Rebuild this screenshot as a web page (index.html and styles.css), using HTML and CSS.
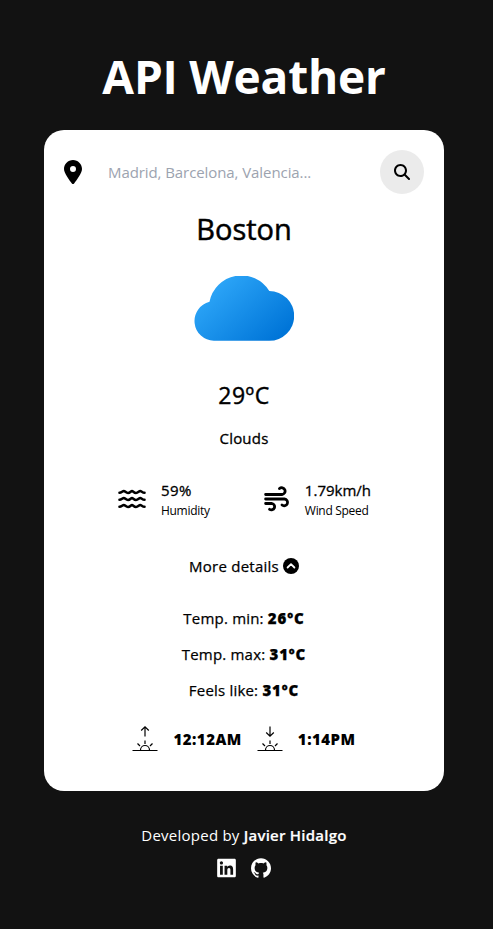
FILE: index.html
```html
<!DOCTYPE html>
<html lang="en">
<head>
<meta charset="utf-8">
<meta name="viewport" content="width=device-width, initial-scale=1">
<title>API Weather</title>
<link rel="stylesheet" href="styles.css">
</head>
<body>
<main class="app">
  <h1 class="title"><span>API Weather</span></h1>
  <section class="card">
    <form class="search">
      <svg class="pin" viewBox="0 0 384 512"><path d="M215.7 499.2C267 435 384 279.4 384 192C384 86 298 0 192 0S0 86 0 192c0 87.4 117 243 168.3 307.2c12.3 15.3 35.1 15.3 47.4 0zM192 128a64 64 0 1 1 0 128 64 64 0 1 1 0-128z"/></svg>
      <input class="field" type="text" placeholder="Madrid, Barcelona, Valencia...">
      <button class="submit" type="button" aria-label="Search"><svg width="16" height="16" viewBox="0 0 512 512"><path d="M416 208c0 45.9-14.9 88.3-40 122.7L502.6 457.4c12.5 12.5 12.5 32.8 0 45.3s-32.8 12.5-45.3 0L330.7 376c-34.4 25.2-76.8 40-122.7 40C93.1 416 0 322.9 0 208S93.1 0 208 0S416 93.1 416 208zM208 352a144 144 0 1 0 0-288 144 144 0 1 0 0 288z"/></svg></button>
    </form>
    <h2 class="city">Boston</h2>
    <svg class="cloud" viewBox="0 0 100 65">
      <defs><linearGradient id="sky" x1="22" y1="5" x2="78" y2="67" gradientUnits="userSpaceOnUse"><stop offset="0" stop-color="#2da6f8"/><stop offset="1" stop-color="#0075d8"/></linearGradient></defs>
      <path fill="url(#sky)" d="M19.800 64.800A19.800 19.800 0 0 1 15.500 25.800A32.600 32.600 0 0 1 75.300 15A24.900 24.900 0 0 1 75.300 64.800Z"/>
    </svg>
    <p class="degrees">29ºC</p>
    <p class="state">Clouds</p>
    <div class="stats">
      <div class="stat humidity">
        <svg width="28" height="20" viewBox="0 0 28 20" fill="none" stroke="#000" stroke-width="2.600" stroke-linecap="round" stroke-linejoin="round"><path d="M1.500 3.800C3.500 3.800 4.500 2 5.800 2S8 4 10 4s3-2 4-2 2 2 4 2 3-2 4.200-2S24.500 3.800 26.500 3.800"/><path d="M1.500 10.800C3.500 10.800 4.500 9 5.800 9S8 11 10 11s3-2 4-2 2 2 4 2 3-2 4.200-2S24.500 10.800 26.500 10.800"/><path d="M1.500 17.800C3.500 17.800 4.500 16 5.800 16S8 18 10 18s3-2 4-2 2 2 4 2 3-2 4.200-2S24.500 17.800 26.500 17.800"/></svg>
        <div><p class="value pct">59%</p><p class="label">Humidity</p></div>
      </div>
      <div class="stat wind">
        <svg width="26" height="26" viewBox="0 0 26 26" fill="none" stroke="#000" stroke-width="2.800" stroke-linecap="round" stroke-linejoin="round"><path d="M1.600 8.500H18a3.400 3.400 0 1 0-2.500-6"/><path d="M1.600 13H20.500a3.400 3.400 0 1 1-2.500 6"/><path d="M1.600 17.500H8a3.200 3.200 0 1 1-2.400 5.800"/></svg>
        <div><p class="value">1.79km/h</p><p class="label">Wind Speed</p></div>
      </div>
    </div>
    <p class="more"><span>More details</span><svg width="16" height="16" viewBox="0 0 16 16"><circle cx="8" cy="8" r="8"/><path d="M4.600 9.500L8 6.200l3.400 3.300" fill="none" stroke="#fff" stroke-width="1.800" stroke-linecap="round" stroke-linejoin="round"/></svg></p>
    <div class="details">
      <p>Temp. min: <b>26ºC</b></p>
      <p>Temp. max: <b>31ºC</b></p>
      <p>Feels like: <b>31ºC</b></p>
    </div>
    <div class="sun">
      <svg width="26" height="26" viewBox="0 0 26 26" fill="none" stroke="#000" stroke-width="1.200"><path d="M.5 24.500h25M8.500 24a4.500 4.500 0 0 1 9 0M13 14.500v3.500M5.500 17.500l2.500 2.500M20.500 17.500L18 20M13 10.500V1M9.200 4.500L13 .9l3.800 3.600"/></svg>
      <b>12:12AM</b>
      <svg width="26" height="26" viewBox="0 0 26 26" fill="none" stroke="#000" stroke-width="1.200"><path d="M.5 24.500h25M8.500 24a4.500 4.500 0 0 1 9 0M13 14.500v3.500M5.500 17.500l2.500 2.500M20.500 17.500L18 20M13 .5V10M9.200 6.500L13 10.100l3.800-3.600"/></svg>
      <b>1:14PM</b>
    </div>
  </section>
  <footer class="footer">
    <p>Developed by <b>Javier Hidalgo</b></p>
    <div class="links">
      <svg width="19" height="20" viewBox="0 16 448 480"><path d="M416 32H31.900C14.300 32 0 46.500 0 64.300v383.400C0 465.500 14.300 480 31.900 480H416c17.600 0 32-14.500 32-32.300V64.300c0-17.800-14.400-32.300-32-32.300zM135.400 416H69V202.200h66.500V416zm-33.200-243c-21.300 0-38.500-17.300-38.500-38.500S80.900 96 102.200 96c21.200 0 38.500 17.300 38.500 38.500 0 21.300-17.200 38.500-38.500 38.500zm282.100 243h-66.400V312c0-24.800-.5-56.700-34.500-56.700-34.600 0-39.900 27-39.900 54.900V416h-66.400V202.200h63.700v29.200h.9c8.900-16.800 30.600-34.500 62.200-34.500 66.500 0 78.900 43.800 78.900 100.900V416z"/></svg>
      <svg width="20" height="20" viewBox="0 0 24 24"><path d="M12 .297c-6.630 0-12 5.373-12 12 0 5.303 3.438 9.800 8.205 11.385.6.113.82-.258.82-.577 0-.285-.01-1.040-.015-2.040-3.338.724-4.042-1.610-4.042-1.610C4.422 18.070 3.633 17.700 3.633 17.700c-1.087-.744.084-.729.084-.729 1.205.084 1.838 1.236 1.838 1.236 1.070 1.835 2.809 1.305 3.495.998.108-.776.417-1.305.76-1.605-2.665-.3-5.466-1.332-5.466-5.930 0-1.310.465-2.380 1.235-3.220-.135-.303-.54-1.523.105-3.176 0 0 1.005-.322 3.300 1.230.96-.267 1.980-.399 3-.405 1.020.006 2.040.138 3 .405 2.280-1.552 3.285-1.230 3.285-1.230.645 1.653.24 2.873.12 3.176.765.84 1.230 1.910 1.230 3.220 0 4.610-2.805 5.625-5.475 5.920.42.36.81 1.096.81 2.220 0 1.606-.015 2.896-.015 3.286 0 .315.21.69.825.57C20.565 22.092 24 17.592 24 12.297c0-6.627-5.373-12-12-12"/></svg>
    </div>
  </footer>
</main>
</body>
</html>
```
FILE: styles.css
```css
* { box-sizing: border-box; margin: 0; padding: 0; }
body { background: #121212; color: #000; font: 500 15px/24px "Segoe UI", "Open Sans", "Noto Sans", sans-serif; overflow: hidden; }
svg { display: block; flex: none; }
.app { width: 488px; height: 929px; padding-top: 46px; display: flex; flex-direction: column; align-items: center; }
.title { height: 84px; color: #fff; font-size: 46px; line-height: 60px; font-weight: 700; letter-spacing: -.2px; white-space: nowrap; }
.card { width: 400px; height: 661px; padding: 20px; background: #fff; border-radius: 20px; display: flex; flex-direction: column; align-items: center; white-space: nowrap; }
.search { width: 100%; height: 44px; display: flex; align-items: center; }
.pin { width: 18px; height: 24px; }
.field { flex: 1; min-width: 0; height: 44px; margin-left: 26px; border: 0; outline: 0; background: none; font: 400 15px/24px "Segoe UI", "Open Sans", sans-serif; letter-spacing: -.08px; }
.field::placeholder { color: #9ca3af; opacity: 1; }
.submit { width: 44px; height: 44px; border: 0; border-radius: 50%; background: #ebebeb; display: grid; place-items: center; }
.city { margin-top: 17px; font-size: 29px; line-height: 36px; font-weight: 500; -webkit-text-stroke: .5px; }
.cloud { width: 100px; height: 65px; margin-top: 29px; }
.degrees { margin-top: 38px; font-size: 23px; line-height: 32px; letter-spacing: .5px; -webkit-text-stroke: .4px; }
.state { margin-top: 15px; letter-spacing: .2px; -webkit-text-stroke: .3px; }
.stats { width: 254px; height: 40px; margin-top: 30px; padding-left: 1px; display: flex; justify-content: space-between; }
.stat { display: flex; align-items: center; gap: 15px; }
.stat svg { margin-top: -2px; }
.value { line-height: 20px; -webkit-text-stroke: .3px; }
.pct { letter-spacing: .4px; }
.label { font-size: 12px; line-height: 21px; font-weight: 400; letter-spacing: -.3px; }
.more { margin-top: 34px; display: flex; align-items: center; gap: 4px; letter-spacing: .25px; -webkit-text-stroke: .25px; }
.more svg { -webkit-text-stroke: 0; }
.details { margin-top: 28px; display: grid; gap: 12px; text-align: center; letter-spacing: .2px; -webkit-text-stroke: .25px; }
.details b, .sun b { font-weight: 800; letter-spacing: .5px; }
.details b { letter-spacing: .9px; }
.sun { margin-top: 24px; display: flex; align-items: center; gap: 15px; }
.footer { margin-top: 32px; color: #fff; font-weight: 400; text-align: center; letter-spacing: .24px; }
.footer b { font-weight: 600; -webkit-text-stroke: .2px; }
.links { margin-top: 11px; display: flex; justify-content: center; gap: 15px; fill: #fff; }
```
